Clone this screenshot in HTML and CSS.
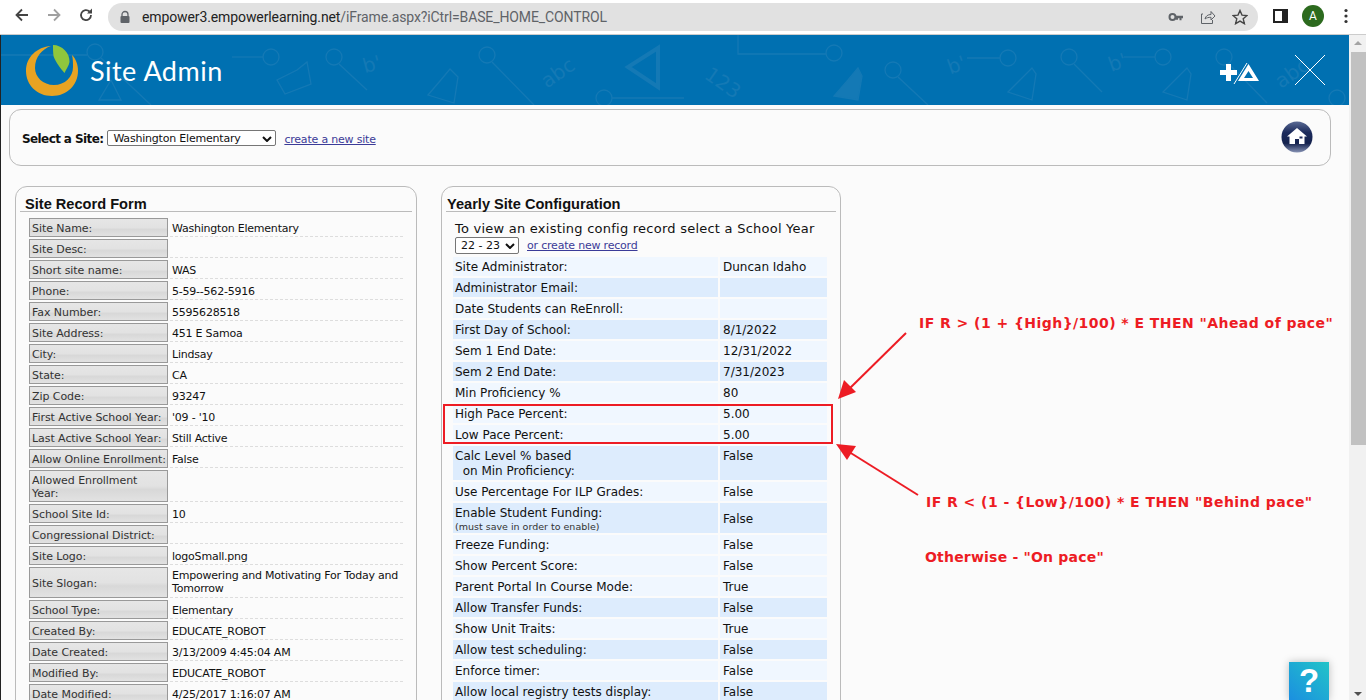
FILE: index.html
```html
<!DOCTYPE html>
<html lang="en">

<head>
    <meta charset="UTF-8">
    <title>Site Admin</title>
    <link rel="stylesheet" href="styles.css">
</head>

<body>
    <div class="toolbar">
        <svg class="nav-icon" viewBox="0 0 16 16"><path d="M14 8H3M8 2.5L2.5 8 8 13.500" fill="none" stroke="#444" stroke-width="1.800"/></svg>
        <svg class="nav-icon" viewBox="0 0 16 16"><path d="M2 8h11M8 2.500L13.500 8 8 13.500" fill="none" stroke="#a0a0a0" stroke-width="1.800"/></svg>
        <svg class="nav-icon" viewBox="0 0 16 16"><path d="M13 8a5 5 0 1 1-1.500-3.500" fill="none" stroke="#444" stroke-width="1.800"/><path d="M14 1.500V6.500H9z" fill="#444"/></svg>
        <div class="omnibox">
            <svg class="lock" viewBox="0 0 12 14"><path d="M3 6V4.500a3 3 0 0 1 6 0V6" fill="none" stroke="#5f6368" stroke-width="1.300"/><rect x="1.500" y="6" width="9" height="7" rx="1" fill="#5f6368"/></svg>
            <div class="url"><span class="host">empower3.empowerlearning.net</span>/iFrame.aspx?iCtrl=BASE_HOME_CONTROL</div>
            <svg class="omni-icon" viewBox="0 0 16 16"><circle cx="4.500" cy="8" r="3" fill="none" stroke="#5f6368" stroke-width="2"/><path d="M7 6.800h8v2.400h-1.500v2h-2v-2H10v1.500H8V9.200H7z" fill="#5f6368"/></svg>
            <svg class="omni-icon" viewBox="0 0 16 16"><path d="M3 5H1.500v9.500h11V11M5 10c.5-3 3-4.500 6-4.500V2.500l4 4.500-4 4V8.300c-2.500 0-4.500.4-6 1.700z" fill="none" stroke="#5f6368"/></svg>
            <svg class="omni-icon" viewBox="0 0 16 16"><path d="M8 1.500l2 4.600 5 .4-3.800 3.300 1.200 4.900L8 12.100l-4.400 2.600 1.200-4.900L1 6.500l5-.4z" fill="none" stroke="#444" stroke-width="1.400"/></svg>
        </div>
        <div class="panel-icon"></div>
        <div class="avatar">A</div>
        <svg class="menu-icon" viewBox="0 0 4 16"><circle cx="2" cy="2.500" r="1.600"/><circle cx="2" cy="8" r="1.600"/><circle cx="2" cy="13.500" r="1.600"/></svg>
    </div>

    <div class="viewport">
        <div class="page">
            <div class="site-head">
                <svg class="head-art" viewBox="0 0 1349 70" fill="none" stroke="#1479b5" stroke-width="1.300">
                    <circle cx="94" cy="17" r="8"/><path d="M0 20H86M100 23L150 70"/>
                    <circle cx="270" cy="22" r="8"/><path d="M231 22H262"/>
                    <circle cx="333" cy="22" r="8"/><path d="M338 29L366 55"/>
                    <path d="M110 45l10 20h-22zM296 35l10-8 4 22-26 10-8-14z"/>
                    <path d="M449 34l8 8-4 26-26-8 12-14z"/>
                    <circle cx="486" cy="20" r="8"/><path d="M491 27L533 70"/>
                    <path d="M657 13L627 32 657 52z" stroke-width="4"/>
                    <circle cx="603" cy="63" r="8"/><path d="M611 63H683"/>
                    <path d="M737 0V19H825"/><circle cx="833" cy="18" r="8"/>
                    <circle cx="892" cy="35" r="8"/><path d="M897 42L927 70"/>
                    <path d="M857 33l4 8-4 24-24-4 14-16z" fill="#1479b5"/>
                    <circle cx="1007" cy="23" r="8"/><path d="M966 23H999"/>
                    <path d="M1031 33l4 6-4 26-24-8 14-14z"/>
                    <circle cx="1068" cy="22" r="8"/><path d="M1073 29L1101 57"/>
                    <circle cx="1162" cy="22" r="8"/><path d="M1123 22H1154"/>
                    <path d="M1186 33l4 6-4 26-24-8 14-14z"/>
                    <circle cx="1223" cy="22" r="8"/><path d="M1228 29L1266 68"/>
                    <circle cx="1336" cy="63" r="8"/>
                    <text class="art-text" x="362" y="35" transform="rotate(-15 375 30)">b'</text>
                    <text class="art-text" x="540" y="45" transform="rotate(-35 557 40)">abc</text>
                    <text class="art-text" x="700" y="50" transform="rotate(35 713 50)">123</text>
                    <text class="art-text" x="948" y="38" transform="rotate(-20 953 35)">b'</text>
                    <text class="art-text" x="1108" y="36" transform="rotate(-20 1112 30)">b'</text>
                    <text class="art-text" x="1273" y="48" transform="rotate(-35 1286 40)">abc</text>
                </svg>
                <svg class="logo" viewBox="0 0 54 54">
                    <path d="M25 3C11 4 0 14 0 28c0 14 11 25 26 25 15 0 26-11 26-25 0-6-2-12-6-16 1 4 1 8 1 12 0 10-8 18-19 18C17 42 9 34 9 25 9 14 16 6 25 3z" fill="#e8a322"/>
                    <path d="M27 2c9 0 17 8 16.500 17-.5 4-3.500 7-5 11-4.500-5-9.500-12-11-17-.5-4-.5-8-.5-11z" fill="#8fc63d"/>
                </svg>
                <div class="head-title">Site Admin</div>
                <div class="head-tools">
                    <svg class="plus-delta" viewBox="0 0 39 22">
                        <path d="M0 11h6V5h5v6h6v5h-6v6H6v-6H0z" fill="#fff"/>
                        <path d="M14 25L27 4" stroke="#fff" stroke-width="1"/>
                        <path d="M28.500 5L39 22H18zM28.500 12L24 19H33z" fill="#fff" fill-rule="evenodd"/>
                    </svg>
                    <svg class="head-close" viewBox="0 0 30 30"><path d="M0 0L30 30M30 0L0 30" stroke="#fff" stroke-width="1"/></svg>
                </div>
            </div>

            <div class="site-bar">
                <label class="site-label">Select a Site:</label>
                <div class="fake-select site-select">Washington Elementary<svg class="chev" viewBox="0 0 10 6"><path d="M1 1l4 4 4-4" fill="none" stroke="#111" stroke-width="2"/></svg></div>
                <a class="link" href="#">create a new site</a>
                <svg class="home-btn" viewBox="0 0 32 32">
                    <defs>
                        <linearGradient id="homeFill" x1="0" y1="0" x2="0" y2="1">
                            <stop offset="0" stop-color="#5a6a94"/>
                            <stop offset="0.350" stop-color="#1c2b5c"/>
                            <stop offset="0.700" stop-color="#14224e"/>
                            <stop offset="1" stop-color="#8793b5"/>
                        </linearGradient>
                    </defs>
                    <circle cx="16" cy="16" r="15.500" fill="url(#homeFill)"/>
                    <path d="M16 7l10 8.500h-2.500V23H18v-5h-4v5H8.500v-7.500H6z" fill="#fff"/>
                    <rect x="18.500" y="15.500" width="3" height="2" fill="#1c2b5c"/>
                </svg>
            </div>

            <div class="cards">
                <div class="card card-record">
                    <div class="card-title">Site Record Form</div>
                    <div class="rec-list">
                        <div class="rec-row"><div class="rec-label">Site Name:</div><div class="rec-val">Washington Elementary</div></div>
                        <div class="rec-row"><div class="rec-label">Site Desc:</div><div class="rec-val"></div></div>
                        <div class="rec-row"><div class="rec-label">Short site name:</div><div class="rec-val">WAS</div></div>
                        <div class="rec-row"><div class="rec-label">Phone:</div><div class="rec-val">5-59--562-5916</div></div>
                        <div class="rec-row"><div class="rec-label">Fax Number:</div><div class="rec-val">5595628518</div></div>
                        <div class="rec-row"><div class="rec-label">Site Address:</div><div class="rec-val">451 E Samoa</div></div>
                        <div class="rec-row"><div class="rec-label">City:</div><div class="rec-val">Lindsay</div></div>
                        <div class="rec-row"><div class="rec-label">State:</div><div class="rec-val">CA</div></div>
                        <div class="rec-row"><div class="rec-label">Zip Code:</div><div class="rec-val">93247</div></div>
                        <div class="rec-row"><div class="rec-label">First Active School Year:</div><div class="rec-val">'09 - '10</div></div>
                        <div class="rec-row"><div class="rec-label">Last Active School Year:</div><div class="rec-val">Still Active</div></div>
                        <div class="rec-row"><div class="rec-label">Allow Online Enrollment:</div><div class="rec-val">False</div></div>
                        <div class="rec-row"><div class="rec-label">Allowed Enrollment Year:</div><div class="rec-val"></div></div>
                        <div class="rec-row"><div class="rec-label">School Site Id:</div><div class="rec-val">10</div></div>
                        <div class="rec-row"><div class="rec-label">Congressional District:</div><div class="rec-val"></div></div>
                        <div class="rec-row"><div class="rec-label">Site Logo:</div><div class="rec-val">logoSmall.png</div></div>
                        <div class="rec-row"><div class="rec-label">Site Slogan:</div><div class="rec-val two-line">Empowering and Motivating For Today and Tomorrow</div></div>
                        <div class="rec-row"><div class="rec-label">School Type:</div><div class="rec-val">Elementary</div></div>
                        <div class="rec-row"><div class="rec-label">Created By:</div><div class="rec-val">EDUCATE_ROBOT</div></div>
                        <div class="rec-row"><div class="rec-label">Date Created:</div><div class="rec-val">3/13/2009 4:45:04 AM</div></div>
                        <div class="rec-row"><div class="rec-label">Modified By:</div><div class="rec-val">EDUCATE_ROBOT</div></div>
                        <div class="rec-row"><div class="rec-label">Date Modified:</div><div class="rec-val">4/25/2017 1:16:07 AM</div></div>
                    </div>
                </div>

                <div class="card card-config">
                    <div class="card-title">Yearly Site Configuration</div>
                    <div class="cfg-intro">To view an existing config record select a School Year</div>
                    <div class="cfg-pick">
                        <div class="fake-select year-select">22 - 23<svg class="chev" viewBox="0 0 10 6"><path d="M1 1l4 4 4-4" fill="none" stroke="#111" stroke-width="2"/></svg></div>
                        <a class="link" href="#">or create new record</a>
                    </div>
                    <div class="cfg-list">
                        <div class="cfg-row"><div>Site Administrator:</div><div class="cfg-val">Duncan Idaho</div></div>
                        <div class="cfg-row alt"><div>Administrator Email:</div><div class="cfg-val"></div></div>
                        <div class="cfg-row"><div>Date Students can ReEnroll:</div><div class="cfg-val"></div></div>
                        <div class="cfg-row alt"><div>First Day of School:</div><div class="cfg-val">8/1/2022</div></div>
                        <div class="cfg-row"><div>Sem 1 End Date:</div><div class="cfg-val">12/31/2022</div></div>
                        <div class="cfg-row alt"><div>Sem 2 End Date:</div><div class="cfg-val">7/31/2023</div></div>
                        <div class="cfg-row"><div>Min Proficiency %</div><div class="cfg-val">80</div></div>
                        <div class="cfg-row"><div>High Pace Percent:</div><div class="cfg-val">5.00</div></div>
                        <div class="cfg-row"><div>Low Pace Percent:</div><div class="cfg-val">5.00</div></div>
                        <div class="cfg-row alt"><div>Calc Level % based<br>&nbsp;&nbsp;on Min Proficiency:</div><div class="cfg-val">False</div></div>
                        <div class="cfg-row"><div>Use Percentage For ILP Grades:</div><div class="cfg-val">False</div></div>
                        <div class="cfg-row alt"><div>Enable Student Funding:<div class="cfg-note">(must save in order to enable)</div></div><div class="cfg-val middle">False</div></div>
                        <div class="cfg-row"><div>Freeze Funding:</div><div class="cfg-val">False</div></div>
                        <div class="cfg-row"><div>Show Percent Score:</div><div class="cfg-val">False</div></div>
                        <div class="cfg-row"><div>Parent Portal In Course Mode:</div><div class="cfg-val">True</div></div>
                        <div class="cfg-row alt"><div>Allow Transfer Funds:</div><div class="cfg-val">False</div></div>
                        <div class="cfg-row"><div>Show Unit Traits:</div><div class="cfg-val">True</div></div>
                        <div class="cfg-row alt"><div>Allow test scheduling:</div><div class="cfg-val">False</div></div>
                        <div class="cfg-row"><div>Enforce timer:</div><div class="cfg-val">False</div></div>
                        <div class="cfg-row alt"><div>Allow local registry tests display:</div><div class="cfg-val">False</div></div>
                    </div>
                </div>
            </div>

            <!-- annotations drawn on top of the screenshot -->
            <div class="mark-box"></div>
            <svg class="mark-arrows" viewBox="0 0 1349 665">
                <path d="M905 298L845 357" stroke="#ed1c24" stroke-width="2" fill="none"/>
                <path d="M837 364L843 345 855 357z" fill="#ed1c24"/>
                <path d="M917 460L845 415" stroke="#ed1c24" stroke-width="2" fill="none"/>
                <path d="M835 409L855 411 846 425z" fill="#ed1c24"/>
            </svg>
            <div class="note note-high">IF R &gt; (1 + {High}/100) * E THEN "Ahead of pace"</div>
            <div class="note note-low">IF R &lt; (1 - {Low}/100) * E THEN "Behind pace"</div>
            <div class="note note-else">Otherwise - "On pace"</div>

            <div class="help-btn">?</div>
        </div>
        <div class="scrollbar">
            <div class="sb-arrow sb-up"></div>
            <div class="sb-thumb"></div>
            <div class="sb-arrow sb-down"></div>
        </div>
    </div>
</body>

</html>
```

FILE: styles.css
```css
* {
    margin: 0px;
    padding: 0px;
    box-sizing: border-box;
}

html,
body {
    width: 100%;
    height: 100%;
    overflow: hidden;
}

body {
    font-family: "DejaVu Sans", Verdana, sans-serif;
    font-size: 11px;
    color: #222;
    background: #fff;
}

/* browser toolbar */
.toolbar {
    height: 35px;
    display: flex;
    align-items: center;
    padding: 0 16px 5px 14px;
    background: #fff;
    border-bottom: 1px solid #ccc;
}

.nav-icon {
    width: 16px;
    height: 16px;
    margin-right: 16px;
    flex: none;
}

.nav-icon:nth-child(3) {
    margin-right: 14px;
}

.omnibox {
    width: 1150px;
    height: 28px;
    display: flex;
    align-items: center;
    padding: 0 10px 0 11px;
    margin-top: 4px;
    border-radius: 14px;
    background: #e1e1e1;
}

.lock {
    width: 12px;
    height: 14px;
    flex: none;
    margin-right: 11px;
}

.url {
    flex: 1;
    font-family: "Roboto", "Liberation Sans", sans-serif;
    font-size: 14px;
    color: #5f6368;
    letter-spacing: -0.110px;
}

.url .host {
    color: #222;
}

.omni-icon {
    width: 16px;
    height: 16px;
    margin-left: 16px;
    flex: none;
}

.panel-icon {
    width: 15px;
    height: 14px;
    margin: 2px 14px 0 15px;
    border: 2px solid #222;
    border-right-width: 6px;
    flex: none;
}

.avatar {
    width: 22px;
    height: 22px;
    margin-top: 2px;
    border-radius: 50%;
    background: #2c6a1e;
    color: #fff;
    font-family: "Roboto", sans-serif;
    font-size: 12px;
    line-height: 22px;
    text-align: center;
    flex: none;
}

.menu-icon {
    width: 4px;
    height: 16px;
    margin: 2px 0 0 20px;
    fill: #333;
    flex: none;
}

/* page + scrollbar */
.viewport {
    height: 665px;
    display: flex;
}

.page {
    position: relative;
    width: 1349px;
    height: 665px;
    overflow: hidden;
    background: #fbfbfb;
    border-left: 1px solid #222;
}

.scrollbar {
    width: 17px;
    height: 665px;
    display: flex;
    flex-direction: column;
    align-items: flex-end;
    background: #f1f1f1;
}

.sb-arrow {
    width: 15px;
    height: 17px;
    flex: none;
    position: relative;
}

.sb-up::after,
.sb-down::after {
    content: "";
    position: absolute;
    left: 3px;
    border-left: 4px solid transparent;
    border-right: 4px solid transparent;
}

.sb-up::after {
    top: 6px;
    border-bottom: 4px solid #a3a3a3;
}

.sb-down::after {
    bottom: 4px;
    border-top: 4px solid #505050;
}

.sb-thumb {
    width: 15px;
    height: 393px;
    background: #c1c1c1;
}

.sb-down {
    margin-top: auto;
}

/* blue header */
.site-head {
    position: relative;
    height: 70px;
    display: flex;
    align-items: center;
    padding-left: 25px;
    background: #0070b1;
    color: #fff;
    overflow: hidden;
}

.head-art {
    position: absolute;
    left: 0;
    top: 0;
    width: 1349px;
    height: 70px;
}

.art-text {
    font-family: "DejaVu Sans", sans-serif;
    font-size: 20px;
    stroke: none;
    fill: #1479b5;
}

.logo {
    position: relative;
    width: 54px;
    height: 54px;
    flex: none;
}

.head-title {
    position: relative;
    margin-left: 10px;
    font-family: "Lato", sans-serif;
    font-size: 27px;
    letter-spacing: 0.500px;
}

.head-tools {
    position: relative;
    margin-left: auto;
    display: flex;
    align-items: center;
    gap: 36px;
    padding-right: 24px;
}

.plus-delta {
    width: 39px;
    height: 22px;
    overflow: visible;
}

.head-close {
    width: 30px;
    height: 30px;
}

/* site chooser */
.site-bar {
    height: 57px;
    margin: 4px 18px 0 8px;
    padding: 2px 17px 0 12px;
    display: flex;
    align-items: center;
    border: 1px solid #bbb;
    border-radius: 12px;
    background: #fbfbfb;
}

.site-label {
    font-size: 12px;
    font-weight: 700;
    color: #111;
    letter-spacing: -0.600px;
    margin-right: 4px;
}

.fake-select {
    display: flex;
    align-items: center;
    justify-content: space-between;
    height: 16px;
    border: 1px solid #767676;
    border-radius: 2px;
    background: #fff;
    color: #111;
    font-size: 11px;
    letter-spacing: -0.200px;
    padding: 0 3px 0 5px;
}

.chev {
    width: 10px;
    height: 6px;
    flex: none;
}

.site-select {
    width: 169px;
    margin-top: -1px;
    padding-top: 1px;
}

.year-select {
    width: 64px;
    height: 17px;
    letter-spacing: 0;
}

.link {
    color: #3b3b98;
    font-size: 11px;
    letter-spacing: -0.200px;
    text-decoration: underline;
}

.site-bar .link {
    margin: 1px 0 0 8px;
}

.home-btn {
    width: 32px;
    height: 32px;
    margin: -3px 0 0 auto;
}

/* cards */
.cards {
    display: flex;
    align-items: flex-start;
    gap: 24px;
    margin: 20px 0 0 14px;
}

.card {
    width: 402px;
    height: 600px;
    border: 1px solid #bbb;
    border-radius: 12px;
    background: #fbfbfb;
}

.card-config {
    width: 400px;
}

.card-title {
    height: 25px;
    margin: 0 4px;
    padding: 9px 0 0 5px;
    border-bottom: 1px solid #bbb;
    font-family: "Liberation Sans", Arial, sans-serif;
    font-size: 14.600px;
    line-height: 16px;
    font-weight: 700;
    color: #111;
}

.card-config .card-title {
    padding-left: 1px;
}

/* left form */
.rec-list {
    margin: 6px 13px 0 13px;
    display: flex;
    flex-direction: column;
    gap: 2px;
}

.rec-row {
    display: grid;
    grid-template-columns: 139px 1fr;
    column-gap: 2px;
    line-height: 13px;
}

.rec-label {
    display: flex;
    align-items: center;
    padding: 3px 0 1px 2px;
    border: 1px solid #999;
    background: linear-gradient(#e6e6e6 0%, #e2e2e2 50%, #d8d8d8 62%, #e2e2e2 100%);
    color: #333;
    letter-spacing: -0.060px;
}

.rec-val {
    display: flex;
    align-items: center;
    padding: 4px 0 1px 2px;
    border-bottom: 1px dashed #ddd;
    color: #111;
    letter-spacing: -0.220px;
}

.rec-val.two-line {
    padding: 2px 0 2px 2px;
}

/* right form */
.cfg-intro {
    margin: 9px 0 0 13px;
    font-size: 13px;
    line-height: 15px;
    letter-spacing: 0.240px;
    color: #111;
}

.cfg-pick {
    display: flex;
    align-items: center;
    gap: 8px;
    margin: 1px 0 0 13px;
    height: 17px;
}

.cfg-list {
    margin: 3px 0 0 11px;
    display: flex;
    flex-direction: column;
    gap: 2px;
    font-size: 12px;
    line-height: 15px;
    color: #111;
}

.cfg-row {
    display: grid;
    grid-template-columns: 265px 107px;
    column-gap: 2px;
}

.cfg-row>div {
    padding: 3px 2px 1px;
    background: #f0f7ff;
}

.cfg-row.alt>div {
    background: #ddecfd;
}

.cfg-row>.cfg-val {
    padding-left: 3px;
}

.cfg-row>.middle {
    display: flex;
    align-items: center;
}

.cfg-note {
    font-size: 9.500px;
    line-height: 11px;
    color: #333;
}

/* red notes */
.mark-box {
    position: absolute;
    left: 442px;
    top: 369px;
    width: 390px;
    height: 40px;
    border: 2px solid #ed1c24;
}

.mark-arrows {
    position: absolute;
    left: 0;
    top: 0;
    width: 1349px;
    height: 665px;
    pointer-events: none;
}

.note {
    position: absolute;
    color: #ed1c24;
    font-size: 14px;
    font-weight: 700;
    line-height: 18px;
    letter-spacing: 0.450px;
    white-space: nowrap;
}

.note-high {
    left: 918px;
    top: 279px;
}

.note-low {
    left: 925px;
    top: 458px;
}

.note-else {
    left: 924px;
    top: 513px;
    letter-spacing: 0.200px;
}

.help-btn {
    position: absolute;
    left: 1288px;
    top: 627px;
    width: 40px;
    height: 38px;
    background: linear-gradient(to bottom left, #22c4c8 0%, #1b8fe0 100%);
    box-shadow: 0 0 8px rgba(0, 0, 0, 0.250);
    color: #fff;
    font-family: "Liberation Sans", sans-serif;
    font-size: 33px;
    font-weight: 700;
    line-height: 38px;
    text-align: center;
}
```
